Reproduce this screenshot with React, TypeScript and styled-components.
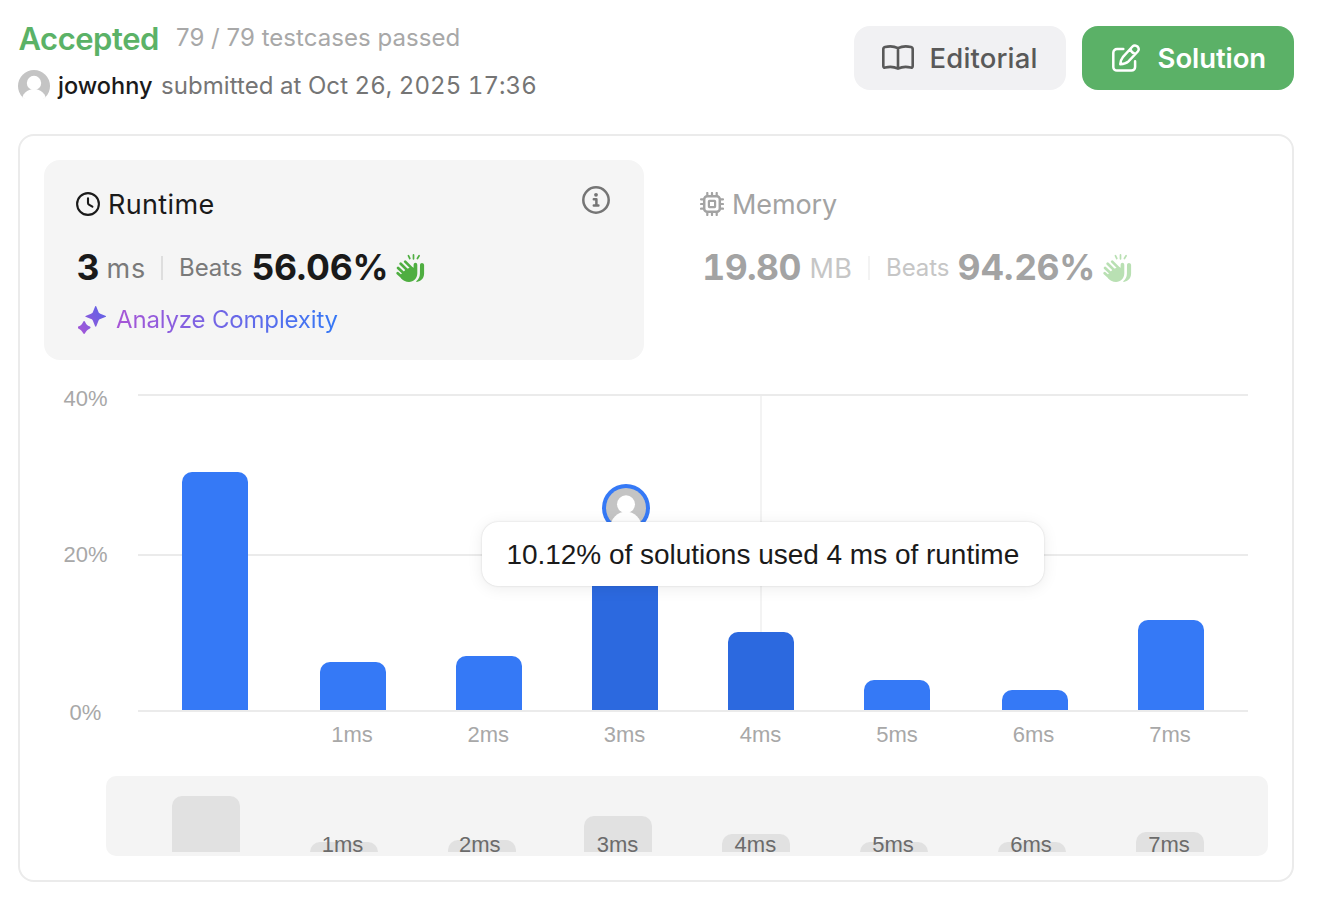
import React from 'react';
import styled, { createGlobalStyle, css } from 'styled-components';

const GlobalStyle = createGlobalStyle`
  * { box-sizing: border-box; }
  body {
    margin: 0;
    background: #fff;
    color: #1a1a1a;
    font-family: Inter, "Liberation Sans", sans-serif;
    font-kerning: normal;
  }
  svg { display: block; flex: none; }
`;

/* ---------- layout ---------- */

const Page = styled.main`
  width: 1318px;
  height: 918px;
  padding: 18px 24px 0 18px;
  overflow: hidden;
`;

const Header = styled.header`
  display: flex;
  justify-content: space-between;
  height: 116px;
`;

const HeaderLine = styled.div<{ $height: number }>`
  display: flex;
  align-items: center;
  height: ${(p) => p.$height}px;
  white-space: nowrap;
`;

const Status = styled.h1`
  margin: 2px 0 0;
  width: 158px;
  font-size: 31px;
  line-height: 40px;
  font-weight: 600;
  letter-spacing: -0.45px;
  padding-left: 0.4px;
  color: #5bb267;
`;

const Testcases = styled.span`
  font-size: 24px;
  line-height: 40px;
  letter-spacing: 0.04px;
  color: #a8a8a8;
`;

const Username = styled.span`
  width: 103px;
  margin: -2px 0 0 8px;
  font-size: 23.5px;
  font-weight: 500;
  color: #1a1a1a;
`;

const Submitted = styled.span`
  margin-top: -2px;
  font-size: 24px;
  font-feature-settings: "tnum";
  letter-spacing: 0.06px;
  color: #757575;
`;

const Actions = styled.div`
  display: flex;
  gap: 16px;
  margin-top: 8px;
`;

const Button = styled.button<{ $primary?: boolean }>`
  display: flex;
  align-items: center;
  width: 212px;
  height: 64px;
  border: 0;
  border-radius: 16px;
  font-family: inherit;
  font-size: 27.5px;
  white-space: nowrap;
  ${(p) =>
    p.$primary
      ? css`
          padding: 0 0 0 30px;
          gap: 17.6px;
          font-weight: 600;
          letter-spacing: -0.08px;
          color: #fff;
          background: #5bb167;
        `
      : css`
          padding: 0 0 0 28px;
          gap: 15.5px;
          font-weight: 500;
          letter-spacing: 0.15px;
          color: #595959;
          background: #f1f1f3;
        `}
`;

const Card = styled.section`
  width: 1276px;
  height: 748px;
  padding: 24px;
  border: 2px solid #ebebeb;
  border-radius: 16px;
`;

const Tiles = styled.div`
  display: grid;
  grid-template-columns: 600px 600px;
  gap: 24px;
`;

/* ---------- metric tiles ---------- */

const Tile = styled.article<{ $active?: boolean }>`
  height: 200px;
  padding: 24px 32px 0;
  border-radius: 16px;
  background: ${(p) => (p.$active ? '#f5f5f5' : 'transparent')};
  color: ${(p) => (p.$active ? '#1a1a1a' : '#a3a3a3')};
`;

const TileHead = styled.div`
  display: flex;
  align-items: center;
  height: 40px;
`;

const TileName = styled.span<{ $gap: number; $track: number }>`
  flex: 1;
  margin-left: ${(p) => p.$gap}px;
  font-size: 27px;
  letter-spacing: ${(p) => p.$track}px;
`;

const InfoButton = styled.span`
  margin: -8px 2px 0 0;
  color: #757575;
`;

const Stats = styled.div<{ $indent: number }>`
  display: flex;
  align-items: center;
  height: 40px;
  margin-top: 24px;
  padding-left: ${(p) => p.$indent}px;
  white-space: nowrap;
`;

const Figure = styled.strong<{ $width: number; $track?: number; $tabular?: boolean }>`
  width: ${(p) => p.$width}px;
  font-size: 35.5px;
  line-height: 40px;
  font-weight: 700;
  font-feature-settings: ${(p) => (p.$tabular ? '"tnum"' : 'normal')};
  letter-spacing: ${(p) => p.$track ?? 0}px;
`;

const Unit = styled.span<{ $width: number; $track: number; $muted?: boolean }>`
  width: ${(p) => p.$width}px;
  font-size: 27px;
  letter-spacing: ${(p) => p.$track}px;
  color: ${(p) => (p.$muted ? '#c6c6c6' : '#7a7a7a')};
`;

const Divider = styled.span<{ $muted?: boolean }>`
  width: 2px;
  height: 24px;
  margin-right: 16px;
  background: ${(p) => (p.$muted ? '#f3f3f3' : '#dedede')};
`;

const Beats = styled.span<{ $width: number; $muted?: boolean }>`
  width: ${(p) => p.$width}px;
  margin-top: -2px;
  font-size: 24px;
  letter-spacing: -0.05px;
  color: ${(p) => (p.$muted ? '#c6c6c6' : '#7a7a7a')};
`;

const Clap = styled.span<{ $muted?: boolean }>`
  color: ${(p) => (p.$muted ? '#b9e0b3' : '#4fae41')};
`;

const Analyze = styled.a`
  display: flex;
  align-items: center;
  gap: 10px;
  height: 40px;
  margin-top: 12px;
  padding-left: 2px;
`;

const AnalyzeText = styled.span`
  margin-top: -2px;
  font-size: 24px;
  letter-spacing: -0.17px;
  background: linear-gradient(90deg, #a855d6 0%, #3478f6 100%);
  background-clip: text;
  -webkit-background-clip: text;
  color: transparent;
`;

/* ---------- chart ---------- */

const Chart = styled.div`
  position: relative;
  display: grid;
  grid-template-columns: 94px 1110px;
  height: 416px;
  padding-top: 34px;
  grid-template-rows: 318px 64px;
  font-family: "Liberation Sans", Arial, sans-serif;
  font-size: 22px;
  color: #a8a8a8;
`;

const YAxis = styled.div`
  display: grid;
  grid-template-rows: 156px 158px 24px;
  width: 83px;
  margin-top: -7px;
  line-height: 24px;
  text-align: center;
`;

const Plot = styled.div`
  display: grid;
  grid-template: 318px / 1110px;
  > * { grid-area: 1 / 1; }
`;

const GridLines = styled.div`
  display: grid;
  grid-template-rows: 160px 156px 2px;
  > i { border-top: 2px solid #ebebeb; }
`;

const HoverLine = styled.div`
  width: 2px;
  height: 314px;
  margin: 2px 0 0 622px;
  background: #f3f3f3;
`;

const Bars = styled.div`
  display: grid;
  grid-template-columns: 138px 136px 136px 136px 136px 138px 136px 66px;
  align-items: end;
  height: 316px;
  padding-left: 44px;
`;

const Bar = styled.div<{ $height: number; $strong?: boolean }>`
  width: 66px;
  height: ${(p) => p.$height}px;
  border-radius: 10px 10px 0 0;
  background: ${(p) => (p.$strong ? '#2c69df' : '#3579f6')};
`;

const XAxis = styled.div`
  grid-column: 2;
  display: grid;
  grid-template-columns: 137.4px 136.3px 136.3px 136px 136.4px 136.5px 136.5px 66px;
  padding: 11px 0 0 43.6px;
  line-height: 24px;
  > span { width: 66px; text-align: center; }
`;

const Marker = styled.div`
  position: absolute;
  left: 558px;
  top: 124px;
  width: 48px;
  height: 48px;
  padding: 4px;
  border-radius: 50%;
  background: #3579f6;
`;

const Tooltip = styled.div`
  position: absolute;
  left: 438px;
  top: 162px;
  width: 562px;
  height: 64px;
  padding-left: 24.4px;
  border-radius: 16px;
  background: #fff;
  box-shadow: 0 0 2px rgba(0, 0, 0, 0.16), 0 2px 16px rgba(0, 0, 0, 0.08);
  font-size: 28px;
  line-height: 66px;
  letter-spacing: -0.02px;
  white-space: nowrap;
  color: #1a1a1a;
`;

/* ---------- overview strip ---------- */

const Overview = styled.div`
  display: grid;
  grid-template: 80px / 1162px;
  width: 1162px;
  margin-left: 62px;
  border-radius: 10px;
  background: #f4f4f4;
  > * { grid-area: 1 / 1; }
`;

const MiniBars = styled.div`
  display: grid;
  grid-template-columns: 138px 138px 136px 138px 138px 138px 138px 68px;
  align-items: end;
  height: 76px;
  padding-left: 66px;
`;

const MiniBar = styled.div<{ $height: number }>`
  width: 68px;
  height: ${(p) => p.$height}px;
  border-radius: 10px 10px 0 0;
  background: #e1e1e1;
`;

const MiniLabels = styled.div`
  display: grid;
  grid-template-columns: 138px 137.2px 137.9px 137.8px 137.6px 138px 138px 68px;
  padding: 57px 0 0 64.5px;
  font: 22px/24px "Liberation Sans", Arial, sans-serif;
  color: #6b6b6b;
  > span { width: 68px; text-align: center; }
`;

/* ---------- icons ---------- */

const stroke = {
  fill: 'none',
  stroke: 'currentColor',
  strokeLinecap: 'round' as const,
  strokeLinejoin: 'round' as const,
};

const BookIcon = () => (
  <svg width="32" height="26" viewBox="0 0 32 26" {...stroke} strokeWidth="2.6">
    <path d="M16 3.2C12.2 1.3 6.6 1.2 3 2.1 1.8 2.4 1.3 3 1.3 4.3v16.6c0 1.4.8 1.9 2 1.6 4.2-1 8.8-.8 12.7 1.1 3.9-1.9 8.5-2.1 12.7-1.1 1.2.3 2-.2 2-1.6V4.3c0-1.3-.5-1.9-1.700-2.200C25.400 1.200 19.800 1.300 16 3.200ZM16 3.200V23.400" />
  </svg>
);

const EditIcon = () => (
  <svg width="28" height="28" viewBox="0 0 28 28" {...stroke} strokeWidth="2.5">
    <path d="M11.3 5H5a3.7 3.7 0 0 0-3.7 3.7v14.2a3.7 3.7 0 0 0 3.7 3.7h14.4a3.7 3.7 0 0 0 3.7-3.7v-5.6" />
    <path d="M8.3 20.2c.2-2.8.7-4.900 2.500-7L20.500 2.500c3-3.300 8.400 1.700 5.300 5L16.200 17.600c-2 1.900-4.600 2.500-7.900 2.600ZM18.400 5c.6 2.600 2 4.200 4.700 5" />
  </svg>
);

const ClockIcon = () => (
  <svg width="24" height="24" viewBox="0 0 24 24" {...stroke} strokeWidth="2.1">
    <circle cx="12" cy="12" r="10.9" />
    <path d="M12 6.200v4.900q0 1 .9 1.500l3.500 2.100" />
  </svg>
);

const InfoIcon = () => (
  <svg width="28" height="28" viewBox="0 0 28 28" {...stroke} strokeWidth="2.5">
    <circle cx="14" cy="14" r="12.7" />
    <circle cx="14" cy="8.8" r="1.9" fill="currentColor" stroke="none" />
    <path d="M11.8 13.3h2.600v6.300M11.800 19.600h4.600" strokeWidth="2.5" />
  </svg>
);

const ChipIcon = () => (
  <svg width="24" height="24" viewBox="0 0 24 24" {...stroke} strokeWidth="2.2">
    <rect x="4.2" y="4.2" width="15.6" height="15.6" rx="3" strokeWidth="2.5" />
    <rect x="8.900" y="8.900" width="6.200" height="6.200" rx=".5" />
    <path d="M7.3 1v3M12 1v3M16.7 1v3M7.3 20v3M12 20v3M16.7 20v3M1 7.3h3M1 12h3M1 16.7h3M20 7.3h3M20 12h3M20 16.7h3" />
  </svg>
);

const SparkleIcon = () => (
  <svg width="28" height="28" viewBox="0 0 28 28">
    <defs>
      <linearGradient id="spark" x1="0" y1="28" x2="28" y2="6" gradientUnits="userSpaceOnUse">
        <stop offset="0" stopColor="#a855d6" />
        <stop offset="1" stopColor="#5f62e6" />
      </linearGradient>
    </defs>
    <g fill="url(#spark)">
      <path d="M17.7 0c.4 0 .6.3.7.7l2 5.1c.4 1.1.8 1.5 1.9 1.9l5 2c.9.3.9 1.1 0 1.4l-5 2c-1.1.4-1.5.8-1.9 1.9l-2 5.1c-.2.8-1.2.8-1.4 0l-2-5.1c-.4-1.1-.8-1.5-1.9-1.9l-5-2c-.9-.3-.9-1.1 0-1.4l5-2c1.1-.4 1.5-.8 1.9-1.9L17 .7c.1-.4.3-.7.7-.7Z" />
      <path d="M5.2 15.7c.5-.9 1.4-.9 1.8 0 1.3 2.7 2 3.5 4.9 4.9.9.5.9 1.3 0 1.8-2.7 1.4-3.5 2.1-4.9 4.9-.4.9-1.3.9-1.8 0C3.8 24.5 3 23.8.3 22.400c-.9-.5-.9-1.300 0-1.800 2.900-1.400 3.600-2.200 4.900-4.900Z" />
    </g>
  </svg>
);

const ClapIcon = () => (
  <svg width="29" height="29" viewBox="0 0 29 29" {...stroke}>
    <g strokeWidth="1.7">
      <path d="M12.4 1.700l1.400 2.800M17.500.9v3.900M23.100 1.700l-1.700 2.800" />
    </g>
    <g strokeWidth="2.7">
      <path d="M1.700 19.200l5 4.600M2.100 13.900l7 6.600M4.700 9.800l8 7.800M9.200 7.600l8 8" />
    </g>
    <path
      d="M4.800 20.400l5-4.800 5.400-2.600 2.400.7V11c0-2.900 3.700-2.900 3.700 0v8.300c0 5-3.700 8.700-8.300 8.700-3.300 0-5.600-1.200-7.700-3.500Z"
      fill="currentColor"
      stroke="none"
    />
    <path
      d="M24 11c0-2.900 4-2.700 4.100 0v8.600c0 4.800-3.200 7.900-7.300 8.400-.7 0-.8-.5-.3-.9 2.300-1.900 3.300-4.200 3.400-7.300Z"
      fill="currentColor"
      stroke="none"
    />
  </svg>
);

const Avatar = ({ size, id }: { size: number; id: string }) => (
  <svg width={size} height={size} viewBox="0 0 32 32">
    <clipPath id={id}>
      <circle cx="16" cy="16" r="16" />
    </clipPath>
    <g clipPath={`url(#${id})`}>
      <rect width="32" height="28.5" fill="#c4c4c4" />
      <circle cx="16" cy="13" r="7.2" fill="#fff" />
      <ellipse cx="16" cy="31" rx="12.3" ry="12" fill="#fff" />
    </g>
  </svg>
);

/* ---------- data ---------- */

const buckets = [
  { label: '', height: 238, mini: 56 },
  { label: '1ms', height: 48, mini: 10 },
  { label: '2ms', height: 54, mini: 12 },
  { label: '3ms', height: 172, mini: 36, strong: true },
  { label: '4ms', height: 78, mini: 18, strong: true },
  { label: '5ms', height: 30, mini: 10 },
  { label: '6ms', height: 20, mini: 10 },
  { label: '7ms', height: 90, mini: 20 },
];

export default function App() {
  return (
    <Page>
      <GlobalStyle />
      <Header>
        <div>
          <HeaderLine $height={40}>
            <Status>Accepted</Status>
            <Testcases>79 / 79 testcases passed</Testcases>
          </HeaderLine>
          <HeaderLine $height={56}>
            <Avatar size={32} id="user-avatar" />
            <Username>jowohny</Username>
            <Submitted>submitted at Oct 26, 2025 17:36</Submitted>
          </HeaderLine>
        </div>
        <Actions>
          <Button>
            <BookIcon />
            Editorial
          </Button>
          <Button $primary>
            <EditIcon />
            Solution
          </Button>
        </Actions>
      </Header>

      <Card>
        <Tiles>
          <Tile $active>
            <TileHead>
              <ClockIcon />
              <TileName $gap={8} $track={0.35}>Runtime</TileName>
              <InfoButton>
                <InfoIcon />
              </InfoButton>
            </TileHead>
            <Stats $indent={0.5}>
              <Figure $width={30}>3</Figure>
              <Unit $width={54.5} $track={0.8}>ms</Unit>
              <Divider />
              <Beats $width={72.5}>Beats</Beats>
              <Figure $width={144.5} $track={-0.3}>56.06%</Figure>
              <Clap>
                <ClapIcon />
              </Clap>
            </Stats>
            <Analyze>
              <SparkleIcon />
              <AnalyzeText>Analyze Complexity</AnalyzeText>
            </Analyze>
          </Tile>
          <Tile>
            <TileHead>
              <ChipIcon />
              <TileName $gap={8} $track={-0.1}>Memory</TileName>
            </TileHead>
            <Stats $indent={2.3}>
              <Figure $width={107.2} $track={-0.55} $tabular>19.80</Figure>
              <Unit $width={58.5} $track={0.3} $muted>MB</Unit>
              <Divider $muted />
              <Beats $width={71.5} $muted>Beats</Beats>
              <Figure $width={145.5} $track={-0.25}>94.26%</Figure>
              <Clap $muted>
                <ClapIcon />
              </Clap>
            </Stats>
          </Tile>
        </Tiles>

        <Chart>
          <YAxis>
            <span>40%</span>
            <span>20%</span>
            <span>0%</span>
          </YAxis>
          <Plot>
            <GridLines>
              <i />
              <i />
              <i />
            </GridLines>
            <HoverLine />
            <Bars>
              {buckets.map((b) => (
                <Bar key={b.label} $height={b.height} $strong={b.strong} />
              ))}
            </Bars>
          </Plot>
          <XAxis>
            {buckets.map((b) => (
              <span key={b.label}>{b.label}</span>
            ))}
          </XAxis>
          <Marker>
            <Avatar size={40} id="marker-avatar" />
          </Marker>
          <Tooltip>10.12% of solutions used 4 ms of runtime</Tooltip>
        </Chart>

        <Overview>
          <MiniBars>
            {buckets.map((b) => (
              <MiniBar key={b.label} $height={b.mini} />
            ))}
          </MiniBars>
          <MiniLabels>
            {buckets.map((b) => (
              <span key={b.label}>{b.label}</span>
            ))}
          </MiniLabels>
        </Overview>
      </Card>
    </Page>
  );
}
